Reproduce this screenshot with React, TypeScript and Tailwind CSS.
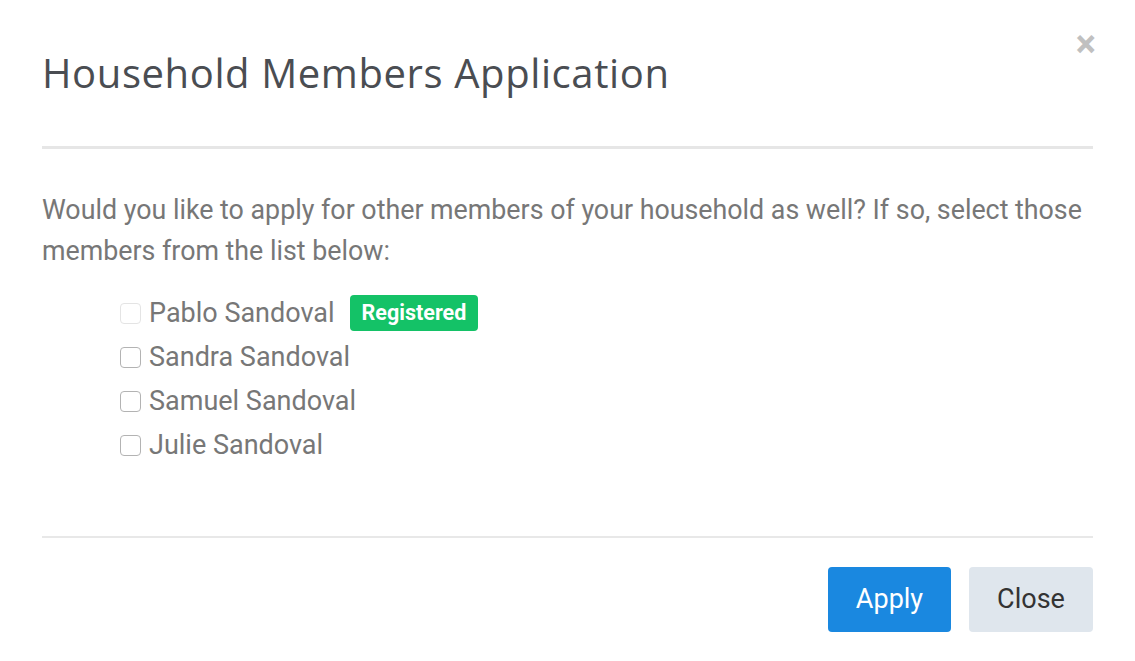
import React from "react";

const members = [
  { name: "Pablo Sandoval", registered: true },
  { name: "Sandra Sandoval", registered: false },
  { name: "Samuel Sandoval", registered: false },
  { name: "Julie Sandoval", registered: false },
];

export default function App() {
  return (
    <div className="w-[1135px] h-[661px] bg-white font-['Roboto',sans-serif] relative">
      <button className="absolute right-[39px] top-[25px] text-[#c0c0c0] text-[38px] leading-none font-bold">
        ×
      </button>
      <div className="px-[42px]">
        <div className="pt-[48px] pb-[48px] border-b-[3px] border-[#e6e6e6]">
          <h1 className="font-['Open_Sans',sans-serif] text-[40px] leading-[50px] text-[#4a4d52] tracking-[0.6px]">
            Household Members Application
          </h1>
        </div>
        <div className="pt-[41px] pb-[69px] border-b-2 border-[#e8e8e8]">
          <p className="text-[26.8px] leading-[41px] text-[#777777]">
            Would you like to apply for other members of your household as well? If so, select those
            members from the list below:
          </p>
          <div className="mt-[19px] pl-[78px] flex flex-col">
            {members.map((m) => (
              <label key={m.name} className="flex items-center h-[44px] gap-[8px]">
                <span
                  className={
                    "w-[21px] h-[21px] rounded-[4px] border bg-white " +
                    (m.registered ? "border-[#e4e4e4]" : "border-[#b3b3b3]")
                  }
                />
                <span className="text-[27px] text-[#777777]">{m.name}</span>
                {m.registered && (
                  <span className="ml-[7px] h-[36px] px-[12px] flex items-center rounded-[4px] bg-[#14c267] text-white text-[21.5px] font-bold">
                    Registered
                  </span>
                )}
              </label>
            ))}
          </div>
        </div>
        <div className="flex justify-end gap-[18px] pt-[29px]">
          <button className="w-[123px] h-[65px] rounded-[4px] bg-[#1a88e0] text-white text-[27px]">
            Apply
          </button>
          <button className="w-[124px] h-[65px] rounded-[4px] bg-[#dfe6ed] text-[#333333] text-[27px]">
            Close
          </button>
        </div>
      </div>
    </div>
  );
}
